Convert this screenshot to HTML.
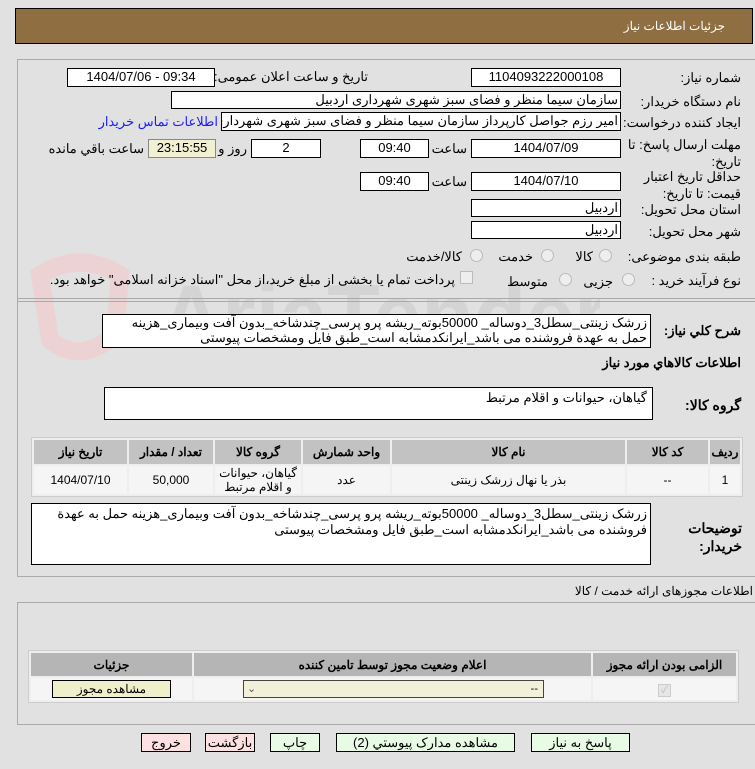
<!DOCTYPE html>
<html><head><meta charset="utf-8"><style>
*{box-sizing:border-box;margin:0;padding:0}
body{width:755px;height:769px;background:#e1e1e1;position:relative;overflow:hidden;font-family:"Liberation Sans","Noto Sans CJK SC",sans-serif;font-size:12px;color:#000}
.a{position:absolute;white-space:nowrap}
.r{direction:rtl;text-align:right}
.box{position:absolute;background:#fff;border:1px solid #000;font-size:13px;line-height:16px;white-space:nowrap}
.c{text-align:center}
.b{font-weight:bold}
.rad{position:absolute;width:13px;height:13px;border-radius:50%;border:1px solid #bbb;background:#eee}
table{border-collapse:separate;border-spacing:2px;position:absolute;background:#eee;border:1px solid #ccc}
td{text-align:center;font-size:12px}
.btn{position:absolute;height:19px;border:1px solid #000;background:#e8fbe4;font-size:13px;text-align:center;line-height:17px;direction:rtl}
</style></head><body>
<div class="a" style="left:15px;top:8px;width:738px;height:36px;background:#8f6e42;border:1px solid #000"></div>
<div class="a r" style="right:30px;top:19px;color:#fff;font-size:12px">جزئیات اطلاعات نیاز</div>

<!-- watermark -->
<svg class="a" style="left:20px;top:245px" width="580" height="130" viewBox="0 0 580 130">
<path d="M20 30 Q60 5 100 30 L95 90 Q60 120 30 95 Z" fill="none" stroke="#ecd2d2" stroke-width="18"/>
<text x="140" y="100" font-size="86" font-weight="bold" fill="#d4d4d4" font-family="Liberation Sans">AriaTender.net</text>
</svg>

<div class="a" style="left:17px;top:59px;width:738px;height:518px;border:1px solid #aaa;border-right:none"></div>
<div class="a" style="left:17px;top:298px;width:738px;height:4px;border-top:1px solid #aaa;border-bottom:1px solid #aaa"></div>

<div class="a r" style="right:14px;top:70px;font-size:13px">شماره نیاز:</div>
<div class="box c" style="left:471px;top:68px;width:150px;height:19px">1104093222000108</div>
<div class="a r" style="left:222px;top:69px;width:146px;font-size:13px">تاریخ و ساعت اعلان عمومی:</div>
<div class="box c" style="left:67px;top:68px;width:148px;height:19px">1404/07/06 - 09:34</div>

<div class="a r" style="right:14px;top:94px;font-size:13px">نام دستگاه خریدار:</div>
<div class="box r" style="left:171px;top:91px;width:450px;height:18px;padding-right:2px">سازمان سیما منظر و فضای سبز شهری شهرداری اردبیل</div>

<div class="a r" style="right:14px;top:115px;font-size:13px">ایجاد کننده درخواست:</div>
<div class="box r" style="left:221px;top:112px;width:400px;height:19px;padding-right:2px;overflow:hidden">امیر رزم جواصل کارپرداز سازمان سیما منظر و فضای سبز شهری شهرداری اردبیل</div>
<div class="a r" style="left:110px;top:114px;width:108px;color:#1a1aff;font-size:13px">اطلاعات تماس خریدار</div>

<div class="a r" style="right:14px;top:136px;font-size:13px;line-height:17px;white-space:normal;width:118px">مهلت ارسال پاسخ: تا تاریخ:</div>
<div class="box c" style="left:471px;top:139px;width:150px;height:19px">1404/07/09</div>
<div class="a r" style="left:430px;top:141px;width:37px;font-size:13px">ساعت</div>
<div class="box c" style="left:360px;top:139px;width:69px;height:19px">09:40</div>
<div class="box c" style="left:251px;top:139px;width:70px;height:19px">2</div>
<div class="a r" style="left:222px;top:141px;width:25px;font-size:13px">روز و</div>
<div class="box c" style="left:148px;top:139px;width:68px;height:19px;background:#f2f0d2;border-color:#888">23:15:55</div>
<div class="a r" style="left:50px;top:141px;width:94px;font-size:13px">ساعت باقي مانده</div>

<div class="a r" style="right:14px;top:168px;font-size:13px;line-height:17px;white-space:normal;width:110px">حداقل تاریخ اعتبار قیمت: تا تاریخ:</div>
<div class="box c" style="left:471px;top:172px;width:150px;height:19px">1404/07/10</div>
<div class="a r" style="left:430px;top:174px;width:37px;font-size:13px">ساعت</div>
<div class="box c" style="left:360px;top:172px;width:69px;height:19px">09:40</div>

<div class="a r" style="right:14px;top:202px;font-size:13px">استان محل تحویل:</div>
<div class="box r" style="left:471px;top:199px;width:150px;height:18px;padding-right:2px">اردبیل</div>
<div class="a r" style="right:14px;top:224px;font-size:13px">شهر محل تحویل:</div>
<div class="box r" style="left:471px;top:221px;width:150px;height:18px;padding-right:2px">اردبیل</div>

<div class="a r" style="right:14px;top:249px;font-size:13px">طبقه بندی موضوعی:</div>
<div class="rad" style="left:599px;top:249px"></div><div class="a r" style="left:565px;top:249px;width:28px;font-size:13px">کالا</div>
<div class="rad" style="left:541px;top:249px"></div><div class="a r" style="left:495px;top:249px;width:38px;font-size:13px">خدمت</div>
<div class="rad" style="left:470px;top:249px"></div><div class="a r" style="left:405px;top:249px;width:57px;font-size:13px">کالا/خدمت</div>

<div class="a r" style="right:14px;top:273px;font-size:13px">نوع فرآیند خرید :</div>
<div class="rad" style="left:622px;top:273px"></div><div class="a r" style="left:583px;top:274px;width:30px;font-size:13px">جزیی</div>
<div class="rad" style="left:559px;top:273px"></div><div class="a r" style="left:510px;top:274px;width:38px;font-size:13px">متوسط</div>
<div class="a" style="left:460px;top:271px;width:13px;height:13px;border:1px solid #bbb;background:#eee"></div>
<div class="a r" style="left:60px;top:272px;width:395px;font-size:13px">پرداخت تمام یا بخشی از مبلغ خرید،از محل "اسناد خزانه اسلامی" خواهد بود.</div>

<div class="a r b" style="right:14px;top:323px;font-size:13px">شرح کلي نياز:</div>
<div class="box r" style="left:102px;top:314px;width:549px;height:34px;white-space:normal;padding:0 3px;line-height:15px">زرشک زینتی_سطل3_دوساله_ 50000بوته_ریشه پرو پرسی_چندشاخه_بدون آفت وبیماری_هزینه حمل به عهدة فروشنده می باشد_ایرانکدمشابه است_طبق فایل ومشخصات پیوستی</div>

<div class="a r b" style="right:14px;top:355px;font-size:13px">اطلاعات کالاهاي مورد نياز</div>
<div class="a r b" style="right:14px;top:397px;font-size:14px">گروه کالا:</div>
<div class="box r" style="left:104px;top:387px;width:549px;height:33px;padding:2px 5px">گیاهان، حیوانات و اقلام مرتبط</div>

<table style="left:31px;top:437px;width:712px;height:59px;direction:rtl">
<tr style="background:#c2c2c2;height:24px" class="b"><td style="width:30px">ردیف</td><td style="width:81px">کد کالا</td><td style="width:233px">نام کالا</td><td style="width:87px">واحد شمارش</td><td style="width:86px">گروه کالا</td><td style="width:84px">تعداد / مقدار</td><td>تاریخ نیاز</td></tr>
<tr style="background:#f5f5f5"><td>1</td><td>--</td><td>بذر یا نهال زرشک زینتی</td><td>عدد</td><td style="line-height:14px">گیاهان، حیوانات و اقلام مرتبط</td><td>50,000</td><td>1404/07/10</td></tr>
</table>

<div class="a r b" style="left:680px;top:519px;width:62px;font-size:14px;white-space:normal;line-height:18px">توضیحات خریدار:</div>
<div class="box r" style="left:31px;top:503px;width:620px;height:62px;white-space:normal;padding:2px 3px;line-height:16px">زرشک زینتی_سطل3_دوساله_ 50000بوته_ریشه پرو پرسی_چندشاخه_بدون آفت وبیماری_هزینه حمل به عهدة فروشنده می باشد_ایرانکدمشابه است_طبق فایل ومشخصات پیوستی</div>

<div class="a r" style="right:2px;top:584px;font-size:12px">اطلاعات مجوزهای ارائه خدمت / کالا</div>
<div class="a" style="left:17px;top:602px;width:738px;height:123px;border:1px solid #aaa;border-right:none"></div>
<table style="left:28px;top:650px;width:711px;height:53px;direction:rtl">
<tr style="background:#b5b5b5;height:23px" class="b"><td style="width:143px">الزامی بودن ارائه مجوز</td><td style="width:397px">اعلام وضعیت مجوز توسط تامین کننده</td><td>جزئیات</td></tr>
<tr style="background:#f5f5f5"><td><span style="display:inline-block;width:13px;height:13px;border:1px solid #ccc;background:#e6e6e6;color:#bbb;font-size:10px;line-height:11px">✓</span></td><td style="position:relative"></td><td></td></tr>
</table>
<div class="a" style="left:243px;top:680px;width:301px;height:18px;border:1px solid #444;background:#f2f0d8;font-size:11px;line-height:16px"><span style="position:absolute;left:3px;color:#555">⌄</span><span style="position:absolute;right:5px">--</span></div>
<div class="btn" style="left:52px;top:680px;width:119px;height:18px;background:#f0efcc;font-size:12px;line-height:16px">مشاهده مجوز</div>

<div class="btn" style="left:531px;top:733px;width:99px">پاسخ به نیاز</div>
<div class="btn" style="left:336px;top:733px;width:179px">مشاهده مدارک پیوستي (2)</div>
<div class="btn" style="left:270px;top:733px;width:50px">چاپ</div>
<div class="btn" style="left:205px;top:733px;width:50px;background:#fde0e0">بازگشت</div>
<div class="btn" style="left:141px;top:733px;width:50px;background:#fde0e0">خروج</div>
</body></html>
